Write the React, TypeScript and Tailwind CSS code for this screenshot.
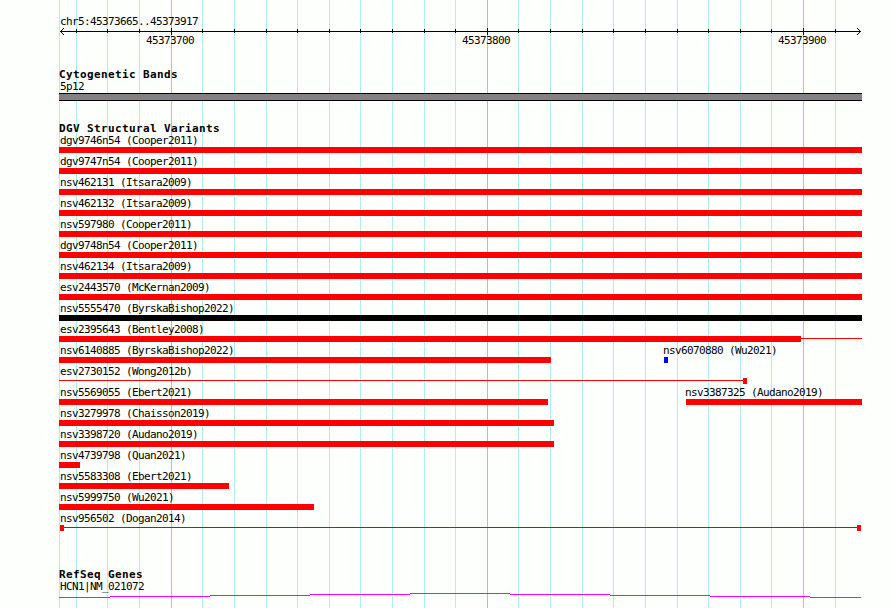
import React from 'react';

const TRACK_START = 59;

const minorLines = [
  59, 76, 107, 139, 202, 234, 266, 297, 329, 360, 392, 424, 455, 518, 550, 582,
  613, 645, 677, 708, 740, 771, 835,
];
const majorLines = [171, 487, 803];

type Feature = {
  name: string;
  start: number;
  end: number;
  color?: string;
  // thin connector drawn before or after the solid part
  line?: [number, number];
  lineColor?: string;
  labelAt?: number;
  extra?: [number, number];
};

const rows: Feature[][] = [
  [{ name: 'dgv9746n54 (Cooper2011)', start: 59, end: 862 }],
  [{ name: 'dgv9747n54 (Cooper2011)', start: 59, end: 862 }],
  [{ name: 'nsv462131 (Itsara2009)', start: 59, end: 862 }],
  [{ name: 'nsv462132 (Itsara2009)', start: 59, end: 862 }],
  [{ name: 'nsv597980 (Cooper2011)', start: 59, end: 862 }],
  [{ name: 'dgv9748n54 (Cooper2011)', start: 59, end: 862 }],
  [{ name: 'nsv462134 (Itsara2009)', start: 59, end: 862 }],
  [{ name: 'esv2443570 (McKernan2009)', start: 59, end: 862 }],
  [{ name: 'nsv5555470 (ByrskaBishop2022)', start: 59, end: 862, color: '#000000' }],
  [{ name: 'esv2395643 (Bentley2008)', start: 59, end: 801, line: [801, 862] }],
  [
    { name: 'nsv6140885 (ByrskaBishop2022)', start: 59, end: 551 },
    { name: 'nsv6070880 (Wu2021)', start: 664, end: 668, color: '#0000ff', labelAt: 663 },
  ],
  [{ name: 'esv2730152 (Wong2012b)', start: 743, end: 747, line: [59, 743] }],
  [
    { name: 'nsv5569055 (Ebert2021)', start: 59, end: 548 },
    { name: 'nsv3387325 (Audano2019)', start: 686, end: 862, labelAt: 685 },
  ],
  [{ name: 'nsv3279978 (Chaisson2019)', start: 59, end: 554 }],
  [{ name: 'nsv3398720 (Audano2019)', start: 59, end: 554 }],
  [{ name: 'nsv4739798 (Quan2021)', start: 59, end: 80 }],
  [{ name: 'nsv5583308 (Ebert2021)', start: 59, end: 229 }],
  [{ name: 'nsv5999750 (Wu2021)', start: 59, end: 314 }],
  [
    {
      name: 'nsv956502 (Dogan2014)',
      start: 60,
      end: 64,
      line: [64, 857],
      lineColor: '#dc0014',
      extra: [857, 861],
    },
  ],
];

const Label: React.FC<{ children: React.ReactNode }> = ({ children }) => (
  <span className="block whitespace-pre text-[11px] tracking-[-0.622px]">{children}</span>
);

const Title: React.FC<{ children: React.ReactNode }> = ({ children }) => (
  <h2 className="h-[12px] whitespace-pre text-[11px] leading-[14px] font-bold tracking-[0.378px]">{children}</h2>
);

const GridLines: React.FC = () => (
  <svg className="absolute inset-0" width="890" height="608" shapeRendering="crispEdges">
    {minorLines.map(x => (
      <rect key={x} x={x} y={0} width={1} height={608} fill="#afeeee" />
    ))}
    {majorLines.map(x => (
      <rect key={x} x={x} y={0} width={1} height={608} fill="#87ceeb" />
    ))}
  </svg>
);

const Ruler: React.FC = () => (
  <svg className="block" width="803" height="7" viewBox="59 28 803 7" shapeRendering="crispEdges">
    <rect x={60} y={31} width={801} height={1} />
    {minorLines.slice(1).map(x => (
      <rect key={x} x={x} y={29} width={1} height={4} />
    ))}
    {majorLines.map(x => (
      <rect key={x} x={x} y={28} width={1} height={7} />
    ))}
    {[1, 2, 3].map(d => (
      <g key={d}>
        <rect x={60 + d} y={31 - d} width={1} height={1} />
        <rect x={60 + d} y={31 + d} width={1} height={1} />
        <rect x={860 - d} y={31 - d} width={1} height={1} />
        <rect x={860 - d} y={31 + d} width={1} height={1} />
      </g>
    ))}
  </svg>
);

const FeatureRow: React.FC<{ features: Feature[] }> = ({ features }) => (
  <div className="grid h-[21px]">
    {features.map(f => (
      <div key={f.name} className="col-start-1 row-start-1">
        <div
          className="h-[15px] pt-[2px] leading-[14px]"
          style={{ paddingLeft: (f.labelAt ?? 60) - TRACK_START }}
        >
          <Label>{f.name}</Label>
        </div>
        <svg className="block" width="803" height="6" viewBox="59 0 803 6" shapeRendering="crispEdges">
          {f.line && (
            <rect x={f.line[0]} y={2} width={f.line[1] - f.line[0]} height={1} fill={f.lineColor ?? '#ff0000'} />
          )}
          <rect x={f.start} y={0} width={f.end - f.start} height={6} fill={f.color ?? '#ff0000'} />
          {f.extra && (
            <rect x={f.extra[0]} y={0} width={f.extra[1] - f.extra[0]} height={6} fill="#ff0000" />
          )}
        </svg>
      </div>
    ))}
  </div>
);

const App: React.FC = () => {
  return (
    <div className="relative h-[608px] w-[890px] overflow-hidden bg-[#fdfffc] font-['DejaVu_Sans_Mono',monospace] text-black">
      <GridLines />
      <main className="relative flex w-[862px] flex-col pl-[59px]">
        <header className="h-[68px] pt-[14px]">
          <div className="h-[14px] pl-px leading-[16px]">
            <Label>chr5:45373665..45373917</Label>
          </div>
          <Ruler />
          <div className="flex h-[12px] pl-[87px] leading-[12px]">
            <div className="w-[316px]"><Label>45373700</Label></div>
            <div className="w-[316px]"><Label>45373800</Label></div>
            <div><Label>45373900</Label></div>
          </div>
        </header>

        <section className="h-[54px]">
          <Title>Cytogenetic Bands</Title>
          <div className="h-[13px] pl-px leading-[13px]">
            <Label>5p12</Label>
          </div>
          <div className="h-2 border-y border-black bg-[#848083]" />
        </section>

        <section className="h-[446px]">
          <Title>DGV Structural Variants</Title>
          <div className="-mt-[2px]">
            {rows.map(features => (
              <FeatureRow key={features[0].name} features={features} />
            ))}
          </div>
        </section>

        <section>
          <Title>RefSeq Genes</Title>
          <div className="h-[13px] pl-px leading-[13px]">
            <Label>HCN1|NM_021072</Label>
          </div>
          <svg className="block" width="803" height="15" viewBox="59 593 803 15" shapeRendering="crispEdges">
            {[597, 596, 595, 594, 593, 594, 595, 596, 597].map((y, i) => {
              const x = i === 0 ? 59 : 10 + i * 100;
              const end = i === 8 ? 861 : 110 + i * 100;
              return <rect key={x} x={x} y={y} width={end - x} height={1} fill="#ff00ff" />;
            })}
          </svg>
        </section>
      </main>
    </div>
  );
};

export default App;
